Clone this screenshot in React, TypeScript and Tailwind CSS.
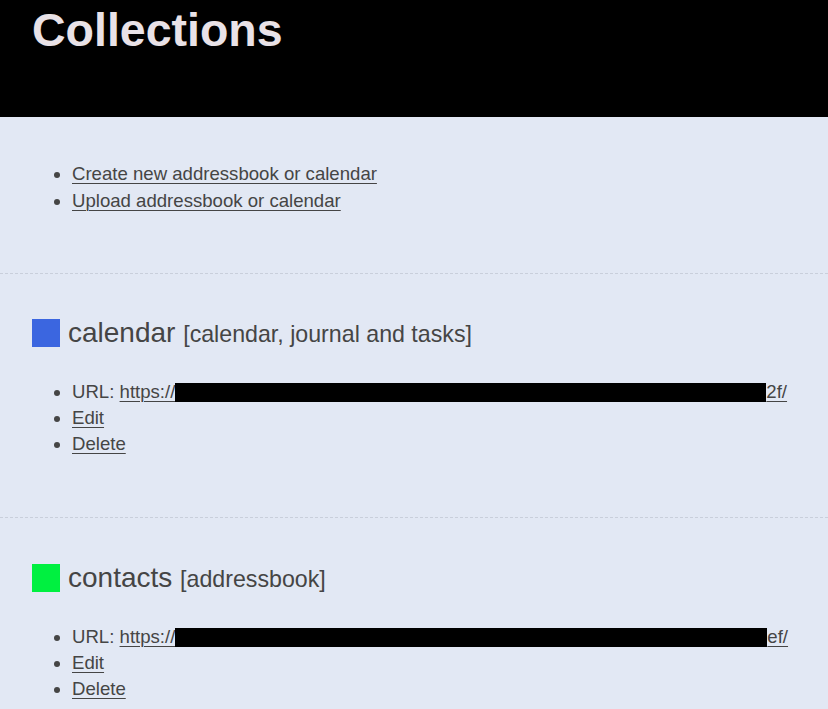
import React from "react";

const font = { fontFamily: '"Liberation Sans", Arial, sans-serif' };

function Redacted({ w }: { w: number }) {
  return (
    <span
      className="inline-block bg-black align-[-4px] h-[19px]"
      style={{ width: w }}
    />
  );
}

function Collection({
  color,
  name,
  kind,
  redactW,
  tail,
  pt,
}: {
  color: string;
  name: string;
  kind: string;
  redactW: number;
  tail: string;
  pt: string;
}) {
  return (
    <section className={`border-t border-dashed border-[#c9cfdb] ${pt} pb-[60px]`}>
      <h2 className="flex items-center h-7 px-8 text-[28px] font-normal text-[#454545] leading-none">
        <span className={`inline-block w-7 h-7 ${color}`} />
        <span className="ml-2 whitespace-nowrap">
          {name} <span className="text-[23.2px]">{kind}</span>
        </span>
      </h2>
      <ul className="mt-[32px] ml-8 pl-10 list-disc text-[18.6px] leading-[26px] text-[#454545]">
        <li>
          URL:{" "}
          <a href="#" className="underline underline-offset-[3px] decoration-1 whitespace-nowrap">
            https://<Redacted w={redactW} />
            {tail}
          </a>
        </li>
        <li>
          <a href="#" className="underline underline-offset-[3px] decoration-1">Edit</a>
        </li>
        <li>
          <a href="#" className="underline underline-offset-[3px] decoration-1">Delete</a>
        </li>
      </ul>
    </section>
  );
}

export default function App() {
  return (
    <div className="min-h-[709px] w-[828px] bg-[#e2e8f4] overflow-hidden" style={font}>
      <header className="bg-black h-[117px] px-8 pt-[7px]">
        <h1 className="text-[46.5px] font-bold leading-none text-[#e9e2e7]">
          Collections
        </h1>
      </header>
      <section className="pt-[43px] pb-[59px]">
        <ul className="ml-8 pl-10 list-disc text-[18.6px] leading-[27px] text-[#454545]">
          <li>
            <a href="#" className="underline underline-offset-[3px] decoration-1">
              Create new addressbook or calendar
            </a>
          </li>
          <li>
            <a href="#" className="underline underline-offset-[3px] decoration-1">
              Upload addressbook or calendar
            </a>
          </li>
        </ul>
      </section>
      <Collection
        color="bg-[#3b66e0]"
        name="calendar"
        kind="[calendar, journal and tasks]"
        redactW={591}
        tail="2f/"
        pt="pt-[45px]"
      />
      <Collection
        color="bg-[#00f040]"
        name="contacts"
        kind="[addressbook]"
        redactW={592}
        tail="ef/"
        pt="pt-[46px]"
      />
    </div>
  );
}
